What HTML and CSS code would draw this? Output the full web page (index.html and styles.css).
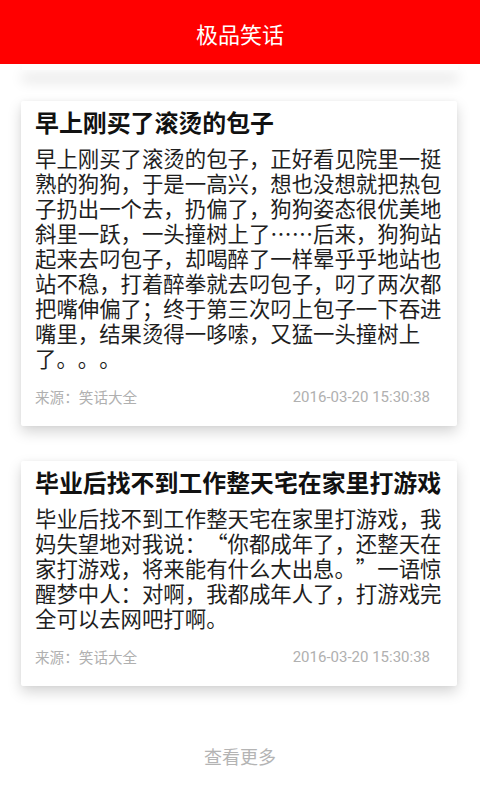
FILE: index.html
```html
<!DOCTYPE html>
<html lang="zh-CN">
<head>
    <meta charset="UTF-8">
    <meta name="viewport" content="width=device-width, initial-scale=1.0">
    <title>极品笑话</title>
    <link rel="stylesheet" href="styles.css">
</head>
<body>
    <header class="top-bar">
        <h1 class="top-title">极品笑话</h1>
    </header>
    <div class="bar-shadow"></div>

    <main class="joke-list">
        <article class="joke-card">
            <h2 class="joke-title">早上刚买了滚烫的包子</h2>
            <p class="joke-text">早上刚买了滚烫的包子，正好看见院里一挺熟的狗狗，于是一高兴，想也没想就把热包子扔出一个去，扔偏了，狗狗姿态很优美地斜里一跃，一头撞树上了……后来，狗狗站起来去叼包子，却喝醉了一样晕乎乎地站也站不稳，打着醉拳就去叼包子，叼了两次都把嘴伸偏了；终于第三次叼上包子一下吞进嘴里，结果烫得一哆嗦，又猛一头撞树上了。。。</p>
            <div class="joke-meta">
                <span class="joke-source">来源：笑话大全</span>
                <span class="joke-date">2016-03-20 15:30:38</span>
            </div>
        </article>

        <article class="joke-card">
            <h2 class="joke-title">毕业后找不到工作整天宅在家里打游戏</h2>
            <p class="joke-text">毕业后找不到工作整天宅在家里打游戏，我妈失望地对我说：“你都成年了，还整天在家打游戏，将来能有什么大出息。”一语惊醒梦中人：对啊，我都成年人了，打游戏完全可以去网吧打啊。</p>
            <div class="joke-meta">
                <span class="joke-source">来源：笑话大全</span>
                <span class="joke-date">2016-03-20 15:30:38</span>
            </div>
        </article>
    </main>

    <div class="more-link">查看更多</div>
</body>
</html>
```

FILE: styles.css
```css
body {
    margin: 0;
    background-color: #fff;
    font-family: "Noto Sans CJK SC", sans-serif;
    color: #222;
    text-spacing-trim: space-all;
}

.top-bar {
    height: 64px;
    background-color: #ff0000;
    display: flex;
    align-items: center;
    justify-content: center;
}

.top-title {
    margin: 0;
    padding-top: 2px;
    color: #fff;
    font-size: 22px;
    font-weight: normal;
    line-height: 30px;
}

/* soft strip under the red bar */
.bar-shadow {
    height: 6px;
    margin: 0 22px;
    background-color: #fff;
    box-shadow: 0 11px 13px rgba(0, 0, 0, 0.15);
}

.joke-list {
    padding: 31px 23px 0 21px;
    display: flex;
    flex-direction: column;
    gap: 35px;
}

.joke-card {
    background-color: #fff;
    border-radius: 2px;
    padding: 6px 14px 19px 14px;
    box-shadow: 0 6px 14px rgba(0, 0, 0, 0.17), 0 0 4px rgba(0, 0, 0, 0.04);
}

.joke-title {
    margin: 0;
    font-size: 23.9px;
    font-weight: bold;
    line-height: 30px;
    color: #111;
    white-space: nowrap;
}

.joke-text {
    margin: 8px 0 0 0;
    font-size: 21.4px;
    line-height: 25px;
    color: #1e1e1e;
}

.joke-meta {
    margin-top: 17px;
    padding-right: 13px;
    display: flex;
    justify-content: space-between;
    align-items: center;
    font-size: 14.6px;
    line-height: 20px;
    color: #b0b0b0;
}

.joke-date {
    font-family: Roboto, "Noto Sans CJK SC", sans-serif;
    font-size: 15px;
}

.more-link {
    margin-top: 58px;
    text-align: center;
    font-size: 18px;
    line-height: 24px;
    color: #b4b4b4;
}
```
